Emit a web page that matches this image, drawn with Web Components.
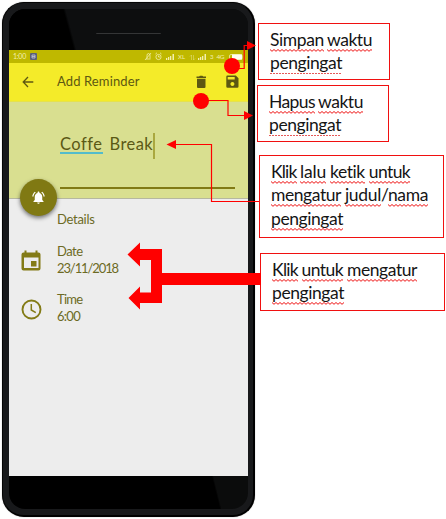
<!DOCTYPE html>
<html lang="id">
<head>
<meta charset="utf-8">
<title>Add Reminder</title>
<style>
html,body{margin:0;background:#fff;width:446px;height:519px;overflow:hidden}
body{font-family:Lato,"Open Sans",sans-serif}
</style>
</head>
<body>
<reminder-guide></reminder-guide>
<script>
const define = (name, html, ready) => {
  const t = document.createElement('template');
  t.innerHTML = html;
  customElements.define(name, class extends HTMLElement {
    constructor() {
      super();
      this.attachShadow({mode: 'open'}).append(t.content.cloneNode(true));
    }
    connectedCallback() { if (ready) ready(this, this.shadowRoot); }
  });
};

// One line of text, tracked so that it fills the width given in "w".
define('fit-text', `<style>
:host{display:block;white-space:nowrap}
span{display:inline-block;white-space:pre}
</style><span><slot></slot></span>`, (el, root) => {
  const s = root.querySelector('span');
  const n = el.textContent.length;
  const w = s.getBoundingClientRect().width;
  s.style.letterSpacing = ((+el.getAttribute('w') - w) / n) + 'px';
});

define('status-bar', `<style>
:host{display:flex;height:13px;background:#bfb800;align-items:center;color:#f3efae;padding:0 2px 0 4px;box-sizing:border-box;font-size:7px;line-height:13px}
i{width:7px;height:7px;background:#5a6079;border-radius:1px;margin-left:4px;display:block}
i svg{display:block}
.r{margin-left:auto;display:block}
</style>
<fit-text w="13">1:00</fit-text>
<i><svg width="7" height="7" fill="none" stroke="#c5c9dc" stroke-width=".8"><path d="M2 2h3v3H2zM2 3.5h3"/></svg></i>
<svg class="r" width="102" height="13" viewBox="145 50 102 13" fill="none" stroke="#f3efae" stroke-width=".8">
<path d="M147 59h4.500M148 58.500v-3q0-2 1.500-2t1.500 2v3M146 60l6-7"/>
<circle cx="159.500" cy="57" r="2.600"/><path d="M159.500 55.500V57h1.500M156.500 54l1.500-1.200M162.500 54l-1.500-1.200"/>
<g fill="#f3efae" stroke="none"><path d="M167 58h1.300v2H167zM169 57h1.300v3H169zM171 56h1.300v4H171zM173.500 54h1.500v6h-1.500zM199 58h1.300v2H199zM201 57h1.300v3H201zM203 56h1.300v4H203zM205.500 54h1.500v6h-1.500z"/>
<text x="179" y="58.500" font-size="6" textLength="7">XL</text><text x="211" y="59" font-size="6">3</text><text x="217.500" y="59" font-size="6.500" textLength="8">4G</text></g>
<path d="M192.500 60v-5l-1.500 1.500M194.500 55v5l1.500-1.500" opacity=".5"/>
<rect x="230.500" y="54.500" width="12.500" height="5" rx="1.500"/><path d="M233 54.500h10v5h-10z" fill="#fffef0" stroke="none"/>
</svg>`);

define('app-bar', `<style>
:host{display:flex;height:38px;background:#f4eb29;box-sizing:border-box;align-items:center;padding:0 9px 1px 13px;color:#5d5812}
.title{font-size:13px;line-height:18px;margin:-2px 0 0 23px;flex:1}
svg{display:block}
</style>
<svg width="12" height="12" fill="none" stroke="#5d5812" stroke-width="1.300"><path d="M11.300 6H1.500M6 1L1.200 6 6 11"/></svg>
<fit-text class="title" w="82.500">Add Reminder</fit-text>
<svg width="10" height="14" viewBox="0 0 10 14" fill="#5d5812"><path d="M.500 1.500h2.600L4 .700h2.400l.800.800H10v1.400H.500zM1 3.800h8.500V12q0 1-1 1H2q-1 0-1-1z"/></svg>
<svg style="margin-left:20px" width="13" height="13" viewBox="0 0 13 13" fill="#5d5812"><path fill-rule="evenodd" d="M1.500.500h8.300L12.500 3.200v8.300q0 1.200-1.200 1.200H1.500Q.300 12.700.300 11.500V1.700Q.300.500 1.500.500zM1.700 1.900v2.700h7V1.900zM6.400 7a2 2 0 1 0 .01 0z"/></svg>`);

define('title-field', `<style>
:host{display:flex;flex-direction:column;height:98px;background:#d9df90;box-sizing:border-box;border-bottom:1px solid #b6b8a0;border-top:1px solid #e6e24c;padding:33px 14px 0 51px;color:#5b5915}
.row{display:flex;align-items:flex-start;font-size:16.500px;line-height:19px;height:52px}
.u{box-shadow:0 2px #53bccb;height:17px}
b{width:1.500px;height:26px;background:#aaa83f;margin-top:-2px}
hr{border:0;margin:0;height:1.500px;background:#817a15;width:175px}
</style>
<div class="row"><fit-text class="u" w="42">Coffe</fit-text><fit-text style="margin-left:7px" w="43.500">Break</fit-text><b></b></div><hr>`);

define('alarm-button', `<style>
:host{display:flex;width:37px;height:37px;border-radius:50%;background:#807913;align-items:center;justify-content:center;box-shadow:0 2px 4px #0008}
</style>
<svg width="15" height="15" viewBox="0 0 24 24" fill="#fff"><path d="M7.580 4.080L6.150 2.650C3.750 4.480 2.170 7.300 2.030 10.500h2c.15-2.650 1.510-4.970 3.550-6.420zm12.390 6.420h2c-.15-3.200-1.730-6.020-4.120-7.850l-1.420 1.430c2.020 1.450 3.390 3.770 3.540 6.420zM18 11c0-3.070-1.640-5.640-4.500-6.320V4c0-.830-.670-1.500-1.500-1.500s-1.500.670-1.500 1.500v.680C7.630 5.360 6 7.920 6 11v5l-2 2v1h16v-1l-2-2v-5zm-6 11c.140 0 .270-.010.400-.040.650-.140 1.180-.580 1.440-1.180.1-.240.150-.500.150-.780h-4c.010 1.100.900 2 2.010 2z"/></svg>`);

define('detail-row', `<style>
:host{display:flex;height:48px;align-items:center;color:#6c6a24;font-size:13px;line-height:17px}
.ic{width:48px;box-sizing:border-box;padding-left:12px;display:flex}
.tx{padding-bottom:2px}
</style><div class="ic"><slot name="icon"></slot></div><div class="tx"><slot></slot></div>`);

define('reminder-details', `<style>
:host{display:block;height:277px;background:#ededed;box-sizing:border-box;padding-top:12px;color:#6c6a24}
svg{display:block}
.h{font-size:13px;line-height:17px;padding-left:48px;margin-bottom:9px}
</style>
<fit-text class="h" w="37.500">Details</fit-text>
<detail-row><svg slot="icon" width="21" height="22" viewBox="0 0 21 22"><path fill="#837b16" fill-rule="evenodd" d="M3.500.500h2v2h9v-2h2v2h1q2 0 2 2v14q0 2-2 2h-15q-2 0-2-2v-14q0-2 2-2h1zM3 7.500V18h14.500V7.500zM10 11h5.500v5.500H10z"/></svg><fit-text w="25.500">Date</fit-text><fit-text w="61">23/11/2018</fit-text></detail-row>
<detail-row><svg slot="icon" width="21" height="21" viewBox="0 0 21 21" fill="none" stroke="#837b16" stroke-width="1.900"><circle cx="10.500" cy="10.500" r="9"/><path stroke-width="1.500" d="M10.300 5v6l4.500 2.700"/></svg><fit-text w="25.500">Time</fit-text><fit-text w="23">6:00</fit-text></detail-row>`);

define('phone-frame', `<style>
:host{display:block;width:253px;height:515px;box-sizing:border-box;border-radius:22px;background:#18191b;border:1px solid #050505;border-right:2px solid #000;border-bottom:2px solid #000;padding:6px 5px 6px 6px;box-shadow:0 0 1px #777}
.glass{position:relative;height:100%;border-radius:16px;background:linear-gradient(76deg,#000 58%,#0b0c0c 58.500%)}
.top{height:41px;border-radius:16px 16px 0 0;background:linear-gradient(75deg,#000 26%,#0d0e0f 27%);display:flex;justify-content:center;align-items:center}
.top i{width:65px;height:1px;border-bottom:1px solid #343536;border-radius:2px;margin-top:7px}
.screen{width:239px;height:426px;position:relative}
</style><div class="glass"><div class="top"><i></i></div><div class="screen"><slot></slot></div></div>`);

// Proofing marks below words: "wave", or "dots" for the lighter mark.
define('spell-word', `<style>
:host{display:block;height:23px;background:url("data:image/svg+xml,%3Csvg xmlns='http://www.w3.org/2000/svg' width='4' height='3'%3E%3Cpath d='M0 .500L2 2.300L4 .500' fill='none' stroke='%23ee1515' stroke-width='1'/%3E%3C/svg%3E") 0 20px/4px 3px repeat-x}
:host([dots]){background:repeating-linear-gradient(90deg,#e65a5a 0 2px,#fff0 2px 3px) 0 21px/100% 1px no-repeat}
:host([plain]){background:none}
</style><slot></slot>`);

define('note-box', `<style>
:host{display:block;box-sizing:border-box;border:1px solid #f01010;background:#fff;color:#151515;font-size:17.500px;line-height:23px;padding:5px 0 0 11px}
</style><slot></slot>`);

define('note-line', `<style>
:host{display:flex;height:23.300px}
fit-text{margin:0}
::slotted(*){line-height:21px}
</style><slot></slot>`);

define('pointer-lines', `<style>:host{display:block;position:absolute;inset:0}svg{display:block}</style>
<svg width="446" height="519" fill="none" stroke="#f00" stroke-width="1.200">
<path d="M239 68.500h5.200V45.500h4M208 100.500h20v15h17M259 201.500h-47.500v-57H175"/>
<g fill="#f00" stroke="none"><circle cx="232" cy="66" r="8"/><circle cx="201" cy="101" r="8"/>
<path d="M247 41l9 4.500-9 4.500zM244 111l9 4.500-9 4.500zM176 140l-9.500 4.500 9.500 4.500z"/>
<path d="M127.500 254.500l12.500-12v6.500h22v24h99v12h-99v18h-22v6.500l-11.500-11.500L140 286.500v6h11V260h-11v6.500z"/></g>
</svg>`);

define('reminder-guide', `<style>
:host{display:grid;position:relative;width:446px;height:519px;grid-template-columns:255px 191px;box-sizing:border-box}
phone-frame{margin:2px 0 0 2px}
alarm-button{position:absolute;left:11px;top:129px}
.notes{display:flex;flex-direction:column;align-items:flex-start;padding-top:23px}
</style>
<phone-frame><status-bar></status-bar><app-bar></app-bar><title-field></title-field><reminder-details></reminder-details><alarm-button></alarm-button></phone-frame>
<div class="notes">
<note-box style="width:132px;height:57px;margin-left:3px">
<note-line><spell-word><fit-text w="54">Simpan</fit-text></spell-word><spell-word style="margin-left:3px"><fit-text w="45">waktu</fit-text></spell-word></note-line>
<note-line><spell-word dots><fit-text w="72">pengingat</fit-text></spell-word></note-line></note-box>
<note-box style="width:132px;height:57px;margin:5px 0 0 2px">
<note-line><spell-word><fit-text w="46">Hapus</fit-text></spell-word><spell-word style="margin-left:3px"><fit-text w="45">waktu</fit-text></spell-word></note-line>
<note-line><spell-word dots><fit-text w="72">pengingat</fit-text></spell-word></note-line></note-box>
<note-box style="width:185px;height:83px;margin:13px 0 0 4px">
<note-line><spell-word><fit-text w="25.500">Klik</fit-text></spell-word><spell-word style="margin-left:3.500px"><fit-text w="26">lalu</fit-text></spell-word><spell-word style="margin-left:4px"><fit-text w="35">ketik</fit-text></spell-word><spell-word style="margin-left:4px"><fit-text w="41.500">untuk</fit-text></spell-word></note-line>
<note-line><spell-word><fit-text w="70">mengatur</fit-text></spell-word><spell-word style="margin-left:4px"><fit-text w="36">judul</fit-text></spell-word><spell-word plain><fit-text w="7">/</fit-text></spell-word><spell-word><fit-text w="40">nama</fit-text></spell-word></note-line>
<note-line><spell-word><fit-text w="72">pengingat</fit-text></spell-word></note-line></note-box>
<note-box style="width:185px;height:58px;margin:15px 0 0 5px">
<note-line><spell-word><fit-text w="26">Klik</fit-text></spell-word><spell-word style="margin-left:3.500px"><fit-text w="41.500">untuk</fit-text></spell-word><spell-word style="margin-left:4px"><fit-text w="70">mengatur</fit-text></spell-word></note-line>
<note-line><spell-word><fit-text w="72">pengingat</fit-text></spell-word></note-line></note-box>
</div>
<pointer-lines></pointer-lines>`);
</script>
</body>
</html>
